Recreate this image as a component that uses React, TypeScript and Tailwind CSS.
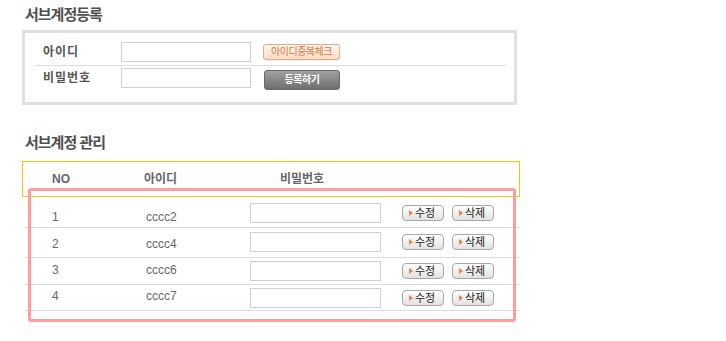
import React from "react";

const rows = [
  { no: "1", id: "cccc2", h: "h-[31px]", tp: "pt-[14px]", ip: "mt-[6px]" },
  { no: "2", id: "cccc4", h: "h-[30px]", tp: "pt-[10px]", ip: "mt-[4px]" },
  { no: "3", id: "cccc6", h: "h-[27px]", tp: "pt-[6px]", ip: "mt-[3px]" },
  { no: "4", id: "cccc7", h: "h-[26px]", tp: "pt-[5px]", ip: "mt-[3px]" },
];

function SmallBtn({ label }: { label: string }) {
  return (
    <button className="flex h-[16px] w-[42px] items-center rounded-[4px] border border-[#a8a8a8] bg-linear-to-b from-white to-[#e2e2e2] pl-[6px] text-[11px] leading-[11px] text-[#222]">
      <span className="mr-[2px] h-0 w-0 border-y-[3px] border-l-[4px] border-y-transparent border-l-[#f08040]" />
      <span>{label}</span>
    </button>
  );
}

export default function App() {
  return (
    <div className="h-[341px] w-[726px] overflow-hidden bg-white pl-[22px] pt-[5px] font-['Liberation_Sans','Noto_Sans_CJK_KR',sans-serif]">
      <h2 className="ml-[3px] h-[20px] text-[15px] font-bold leading-[20px] tracking-[-1px] text-[#505050]">서브계정등록</h2>
      <div className="mt-[5px] h-[75px] w-[495px] border-[3px] border-[#e0e0e0] pt-[9px]">
        <div className="flex h-[20px] items-center">
          <div className="w-[96px] pl-[18px] text-[12px] font-bold leading-[12px] tracking-[1px] text-[#555]">아이디</div>
          <input className="h-[20px] w-[130px] border border-[#d0d0d0] bg-white outline-none" />
          <button className="ml-[12px] flex h-[16px] w-[77px] items-center justify-center rounded-[3px] border border-[#e6a785] bg-linear-to-b from-[#fff8f1] to-[#fcdcc4] text-[10px] leading-[10px] tracking-[-0.5px] text-[#d8743f] shadow-[0_1px_0_#eee]">
            아이디중복체크
          </button>
        </div>
        <div className="ml-[10px] mt-[3px] h-px w-[471px] bg-[#dcdcdc]" />
        <div className="mt-[2px] flex h-[22px] items-start">
          <div className="w-[96px] pl-[18px] pt-[4px] text-[12px] font-bold leading-[12px] tracking-[1px] text-[#555]">비밀번호</div>
          <input type="password" className="h-[20px] w-[130px] border border-[#d0d0d0] bg-white outline-none" />
          <button className="ml-[13px] mt-[2px] flex h-[20px] w-[76px] items-center justify-center rounded-[3px] border border-[#6a6a6a] bg-linear-to-b from-[#a0a0a0] to-[#6f6f6f] text-[10px] font-bold leading-[10px] tracking-[-0.5px] text-white">
            등록하기
          </button>
        </div>
      </div>

      <h2 className="ml-[3px] mt-[28px] h-[20px] text-[15px] font-bold leading-[20px] tracking-[-1px] text-[#505050]">서브계정 관리</h2>
      <div className="relative mt-[8px] w-[498px]">
        <div className="flex h-[36px] items-center border border-[#f5c518] text-[12px] font-bold leading-[12px] text-[#666]">
          <div className="w-[121px] pl-[29px]">NO</div>
          <div className="w-[136px]">아이디</div>
          <div>비밀번호</div>
        </div>
        <div className="ml-[3px] w-[495px]">
          {rows.map((r) => (
            <div key={r.no} className={`flex items-start border-b border-[#dcdcdc] ${r.h}`}>
              <div className={`w-[121px] pl-[27px] text-[12px] leading-[12px] text-[#666] ${r.tp}`}>{r.no}</div>
              <div className={`w-[104px] text-[12px] leading-[12px] text-[#666] ${r.tp}`}>{r.id}</div>
              <div className={`flex h-[20px] items-center ${r.ip}`}>
                <input type="password" className="h-[20px] w-[131px] border border-[#d0d0d0] bg-white outline-none" />
                <div className="ml-[21px]">
                  <SmallBtn label="수정" />
                </div>
                <div className="ml-[8px]">
                  <SmallBtn label="삭제" />
                </div>
              </div>
            </div>
          ))}
        </div>
        <div className="pointer-events-none absolute left-[6px] top-[27px] h-[134px] w-[488px] rounded-[3px] border-[3px] border-[#ff9c9c]" />
      </div>
    </div>
  );
}
